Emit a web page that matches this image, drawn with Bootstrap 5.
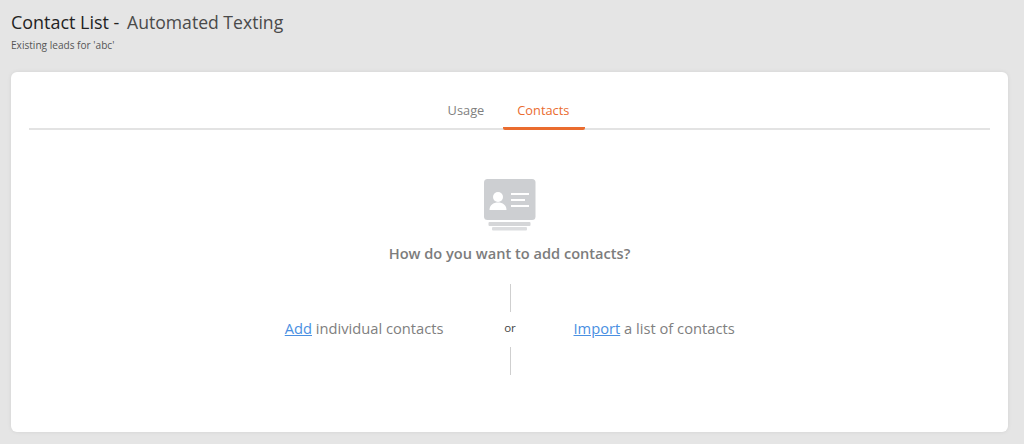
<!DOCTYPE html>
<html lang="en">
  <head>
    <meta charset="UTF-8" />
    <title>Contact List - Automated Texting</title>
    <link href="https://cdn.jsdelivr.net/npm/bootstrap@5.3.0/dist/css/bootstrap.min.css" rel="stylesheet" />
    <style>
      html, body {
        height: 444px;
        overflow: hidden;
      }
      body {
        background-color: #e5e5e5;
        font-family: "Open Sans", sans-serif;
        color: #707070;
      }
      .page-head {
        padding: 10px 11px 0;
        height: 72px;
      }
      .page-title {
        font-size: 17.95px;
        line-height: 24px;
        font-weight: 400;
        color: #4a4a4a;
        margin: 0;
      }
      .page-title b {
        font-weight: 500;
        color: #222;
        margin-right: 3px;
      }
      .title-rest {
        font-size: 17.6px;
      }
      .page-sub {
        font-size: 10.1px;
        line-height: 14px;
        margin-top: 4px;
        color: #555;
      }
      .main-card {
        margin: 0 16px 0 11px;
        height: 360px;
        border: 0;
        border-radius: 6px;
        box-shadow: 0 0 4px rgba(0, 0, 0, 0.08);
        padding: 0 18px;
      }
      .tab-bar {
        height: 58px;
        border-bottom: 2px solid #e3e3e3;
      }
      .tab-link {
        display: block;
        height: 58px;
        padding: 0 19px 0 14px;
        line-height: 76px;
        font-size: 12.8px;
        color: #7f7f7f;
        text-decoration: none;
      }
      .tab-link.on {
        padding: 0 16px 0 14px;
        color: #ea6c2f;
        border-bottom: 3px solid #ea6c2f;
        border-radius: 0 0 2px 2px;
      }
      .add-icon {
        display: block;
        margin-top: 49px;
      }
      .add-title {
        font-size: 14.6px;
        line-height: 20px;
        font-weight: 600;
        color: #7c7c7c;
        margin-top: 12px;
      }
      .choice-row {
        margin-top: 21px;
      }
      .choice-left, .choice-right {
        width: 240px;
        font-size: 14.7px;
        line-height: 20px;
        color: #808080;
        padding-bottom: 4px;
      }
      .choice-left {
        width: 241px;
        padding-right: 66px;
        text-align: right;
      }
      .choice-right {
        padding-left: 63px;
        text-align: left;
      }
      .choice-left a, .choice-right a {
        color: #4a90e2;
      }
      .choice-mid {
        width: 1px;
      }
      .mid-line {
        width: 1px;
        height: 28px;
        background-color: #cfcfcf;
      }
      .mid-or {
        font-size: 11.5px;
        line-height: 16px;
        color: #444;
        padding: 8px 0 11px;
      }
    </style>
  </head>
  <body>
    <div class="page-head">
      <h1 class="page-title"><b>Contact List -</b> <span class="title-rest">Automated Texting</span></h1>
      <div class="page-sub">Existing leads for 'abc'</div>
    </div>

    <div class="card main-card">
      <div class="tab-bar d-flex justify-content-center">
        <a class="tab-link" href="#">Usage</a>
        <a class="tab-link on" href="#">Contacts</a>
      </div>

      <div class="d-flex flex-column align-items-center">
        <svg class="add-icon" width="52" height="52" viewBox="0 0 52 52" aria-hidden="true">
          <rect x="0" y="0" width="51.5" height="41" rx="3.5" fill="#cdcfd2" />
          <circle cx="14" cy="18" r="5" fill="#fff" />
          <path d="M5.5 31c0-5 3.8-7.5 8.5-7.5s8.5 2.5 8.5 7.5z" fill="#fff" />
          <rect x="27" y="14" width="18" height="2" fill="#fff" />
          <rect x="27" y="20" width="14" height="2" fill="#fff" />
          <rect x="27" y="26" width="18" height="2" fill="#fff" />
          <rect x="4.5" y="43" width="42" height="4" rx="1" fill="#d5d6d8" />
          <rect x="8" y="48" width="35" height="3.5" rx="1" fill="#dcdddf" />
        </svg>
        <div class="add-title">How do you want to add contacts?</div>

        <div class="choice-row d-flex align-items-center">
          <div class="choice-left"><a href="#">Add</a> individual contacts</div>
          <div class="choice-mid d-flex flex-column align-items-center">
            <div class="mid-line"></div>
            <div class="mid-or">or</div>
            <div class="mid-line"></div>
          </div>
          <div class="choice-right"><a href="#">Import</a> a list of contacts</div>
        </div>
      </div>
    </div>

    <script src="https://cdn.jsdelivr.net/npm/bootstrap@5.3.0/dist/js/bootstrap.bundle.min.js"></script>
  </body>
</html>
